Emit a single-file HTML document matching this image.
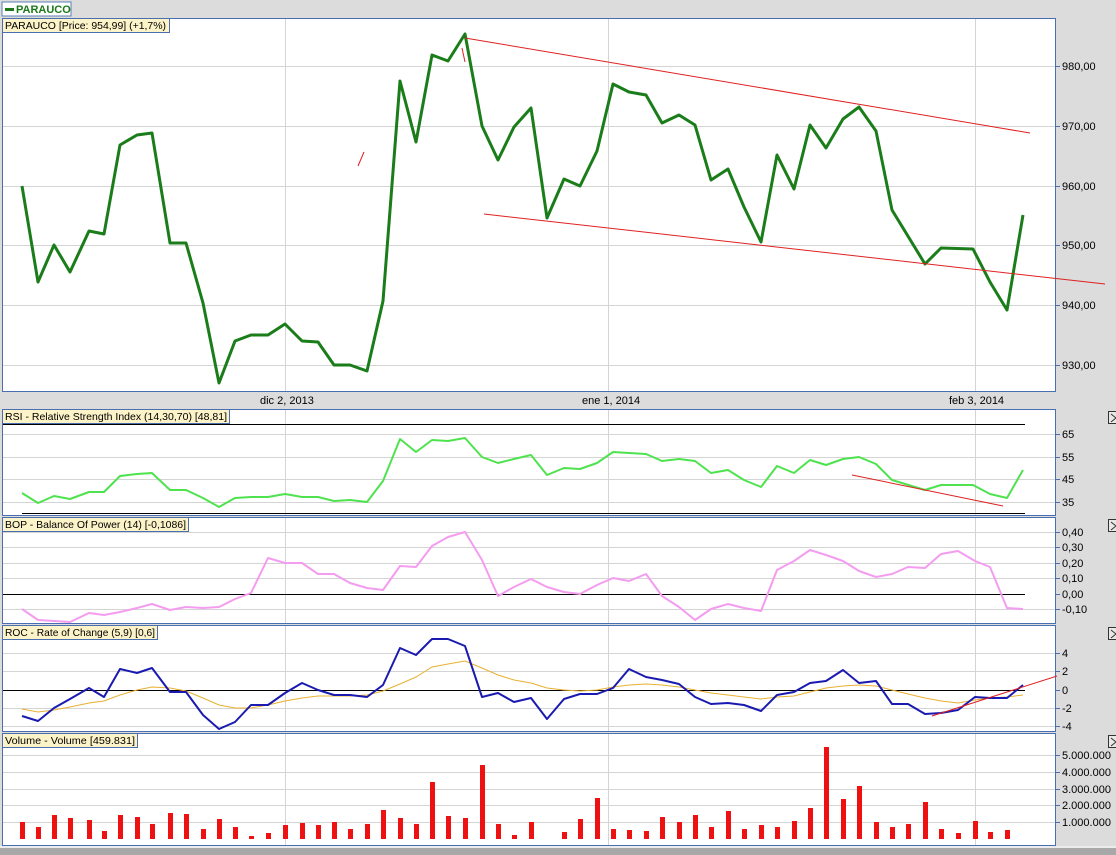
<!DOCTYPE html><html><head><meta charset="utf-8"><style>
body{margin:0;width:1116px;height:855px;overflow:hidden;background:#dcdcdc;font-family:"Liberation Sans",sans-serif}
svg{display:block}
text{font-family:"Liberation Sans",sans-serif;font-size:11px;fill:#000}
text.lb{font-size:10.4px}
</style></head><body>
<svg width="1116" height="855" viewBox="0 0 1116 855">
<rect x="0" y="0" width="1116" height="855" fill="#dcdcdc"/>
<rect x="0" y="848" width="1116" height="7" fill="#a8a8a8"/>
<rect x="0" y="846" width="1116" height="2" fill="#ececec"/>
<rect x="2" y="2" width="69" height="14" fill="#fff" stroke="#5b7fb5"/>
<rect x="5" y="8" width="9" height="3" fill="#1a7a1a"/>
<text x="16" y="13" style="font-weight:bold;fill:#1a7a1a;font-size:11px">PARAUCO</text>
<g fill="#fff" stroke="#4a6fb0">
<rect x="2.5" y="18.5" width="1053" height="373"/>
<rect x="2.5" y="409.5" width="1053" height="106"/>
<rect x="2.5" y="517.5" width="1053" height="106"/>
<rect x="2.5" y="625.5" width="1053" height="106"/>
<rect x="2.5" y="733.5" width="1053" height="112"/>
</g>
<g stroke="#d4d4d4" stroke-width="1">
<line x1="285.5" y1="19" x2="285.5" y2="391"/><line x1="608.5" y1="19" x2="608.5" y2="391"/><line x1="975.5" y1="19" x2="975.5" y2="391"/>
<line x1="285.5" y1="410" x2="285.5" y2="515"/><line x1="608.5" y1="410" x2="608.5" y2="515"/><line x1="975.5" y1="410" x2="975.5" y2="515"/>
<line x1="285.5" y1="518" x2="285.5" y2="623"/><line x1="608.5" y1="518" x2="608.5" y2="623"/><line x1="975.5" y1="518" x2="975.5" y2="623"/>
<line x1="285.5" y1="626" x2="285.5" y2="731"/><line x1="608.5" y1="626" x2="608.5" y2="731"/><line x1="975.5" y1="626" x2="975.5" y2="731"/>
<line x1="285.5" y1="734" x2="285.5" y2="845"/><line x1="608.5" y1="734" x2="608.5" y2="845"/><line x1="975.5" y1="734" x2="975.5" y2="845"/>
<line x1="3" y1="66.5" x2="1055" y2="66.5"/><line x1="3" y1="126.5" x2="1055" y2="126.5"/><line x1="3" y1="186.5" x2="1055" y2="186.5"/><line x1="3" y1="245.5" x2="1055" y2="245.5"/><line x1="3" y1="305.5" x2="1055" y2="305.5"/><line x1="3" y1="365.5" x2="1055" y2="365.5"/>
<line x1="3" y1="434.5" x2="1055" y2="434.5"/><line x1="3" y1="457.5" x2="1055" y2="457.5"/><line x1="3" y1="479.5" x2="1055" y2="479.5"/><line x1="3" y1="502.5" x2="1055" y2="502.5"/>
<line x1="3" y1="532.5" x2="1055" y2="532.5"/><line x1="3" y1="547.5" x2="1055" y2="547.5"/><line x1="3" y1="563.5" x2="1055" y2="563.5"/><line x1="3" y1="578.5" x2="1055" y2="578.5"/><line x1="3" y1="609.5" x2="1055" y2="609.5"/>
<line x1="3" y1="653.5" x2="1055" y2="653.5"/><line x1="3" y1="671.5" x2="1055" y2="671.5"/><line x1="3" y1="708.5" x2="1055" y2="708.5"/><line x1="3" y1="726.5" x2="1055" y2="726.5"/>
<line x1="3" y1="755.5" x2="1055" y2="755.5"/><line x1="3" y1="772.5" x2="1055" y2="772.5"/><line x1="3" y1="789.5" x2="1055" y2="789.5"/><line x1="3" y1="805.5" x2="1055" y2="805.5"/><line x1="3" y1="822.5" x2="1055" y2="822.5"/>
</g>
<g stroke="#4a6fb0"><line x1="1056" y1="66.5" x2="1060" y2="66.5"/><line x1="1056" y1="126.5" x2="1060" y2="126.5"/><line x1="1056" y1="186.5" x2="1060" y2="186.5"/><line x1="1056" y1="245.5" x2="1060" y2="245.5"/><line x1="1056" y1="305.5" x2="1060" y2="305.5"/><line x1="1056" y1="365.5" x2="1060" y2="365.5"/>
<line x1="1056" y1="434.5" x2="1060" y2="434.5"/><line x1="1056" y1="457.5" x2="1060" y2="457.5"/><line x1="1056" y1="479.5" x2="1060" y2="479.5"/><line x1="1056" y1="502.5" x2="1060" y2="502.5"/>
<line x1="1056" y1="532.5" x2="1060" y2="532.5"/><line x1="1056" y1="547.5" x2="1060" y2="547.5"/><line x1="1056" y1="563.5" x2="1060" y2="563.5"/><line x1="1056" y1="578.5" x2="1060" y2="578.5"/><line x1="1056" y1="594.5" x2="1060" y2="594.5"/><line x1="1056" y1="609.5" x2="1060" y2="609.5"/>
<line x1="1056" y1="653.5" x2="1060" y2="653.5"/><line x1="1056" y1="671.5" x2="1060" y2="671.5"/><line x1="1056" y1="690.5" x2="1060" y2="690.5"/><line x1="1056" y1="708.5" x2="1060" y2="708.5"/><line x1="1056" y1="726.5" x2="1060" y2="726.5"/>
<line x1="1056" y1="755.5" x2="1060" y2="755.5"/><line x1="1056" y1="772.5" x2="1060" y2="772.5"/><line x1="1056" y1="789.5" x2="1060" y2="789.5"/><line x1="1056" y1="805.5" x2="1060" y2="805.5"/><line x1="1056" y1="822.5" x2="1060" y2="822.5"/></g>
<g>
<text x="1062" y="70">980,00</text><text x="1062" y="130">970,00</text><text x="1062" y="190">960,00</text><text x="1062" y="249">950,00</text><text x="1062" y="309">940,00</text><text x="1062" y="369">930,00</text>
<text x="1062" y="438">65</text><text x="1062" y="461">55</text><text x="1062" y="483">45</text><text x="1062" y="506">35</text>
<text x="1062" y="536">0,40</text><text x="1062" y="551">0,30</text><text x="1062" y="567">0,20</text><text x="1062" y="582">0,10</text><text x="1062" y="598">0,00</text><text x="1062" y="613">-0,10</text>
<text x="1062" y="657">4</text><text x="1062" y="675">2</text><text x="1062" y="694">0</text><text x="1062" y="712">-2</text><text x="1062" y="730">-4</text>
<text x="1062" y="759">5.000.000</text><text x="1062" y="776">4.000.000</text><text x="1062" y="793">3.000.000</text><text x="1062" y="809">2.000.000</text><text x="1062" y="826">1.000.000</text>
<text x="260" y="404">dic 2, 2013</text><text x="582" y="404">ene 1, 2014</text><text x="949" y="404">feb 3, 2014</text>
</g>
<g fill="#e8e8e8" stroke="#333"><rect x="1108.5" y="411.5" width="10" height="12"/><rect x="1108.5" y="519.5" width="10" height="12"/><rect x="1108.5" y="627.5" width="10" height="12"/><rect x="1108.5" y="735.5" width="10" height="12"/></g>
<g stroke="#333" fill="none"><path d="M1111 414l5 4-5 4"/><path d="M1111 522l5 4-5 4"/><path d="M1111 630l5 4-5 4"/><path d="M1111 738l5 4-5 4"/></g>
<line x1="3" y1="594.5" x2="1025" y2="594.5" stroke="#000"/>
<line x1="3" y1="690.5" x2="1025" y2="690.5" stroke="#000"/>
<line x1="3" y1="424.5" x2="1025" y2="424.5" stroke="#000"/>
<line x1="22" y1="513.5" x2="1025" y2="513.5" stroke="#000"/>
<polyline fill="none" stroke="#1a7d1a" stroke-width="3" stroke-linejoin="round" points="22,186 38,282 54,245 70,272 89,231 104,234 120,145 137,135 152,133 170,243 186,243 203,303 219,383 235,341 251,335 268,335 285,324 302,341 318,342 334,365 350,365 367,371 383,301 400,81 416,142 432,55 448,61 465,34 482,126 498,160 514,127 531,108 547,218 564,179 580,186 597,151 613,84 629,92 646,95 662,123 679,115 695,125 711,180 728,169 744,207 761,242 777,155 794,189 810,125 826,148 843,119 859,107 876,131 892,210 925,264 941,248 973,249 990,282 1007,310 1023,215"/>
<g stroke="#e02020" stroke-width="1"><line x1="465" y1="38" x2="1030" y2="133"/><line x1="484" y1="214" x2="1105" y2="284"/><line x1="358" y1="166" x2="364" y2="152"/><line x1="462" y1="48" x2="465" y2="62"/></g>
<polyline fill="none" stroke="#4ee34e" stroke-width="2" stroke-linejoin="round" points="22,493 38,503 54,496 70,499 89,492 104,492 120,476 137,474 152,473 170,490 186,490 203,498 219,507 235,498 251,497 268,497 285,494 302,497 318,497 334,501 350,500 367,502 383,481 400,439 416,452 432,440 448,441 465,438 482,457 498,463 514,459 531,455 547,475 564,468 580,469 597,463 613,452 629,453 646,454 662,461 679,459 695,461 711,473 728,470 744,480 761,487 777,466 794,473 810,460 826,465 843,459 859,457 876,464 892,480 925,490 941,485 973,485 990,494 1007,498 1023,470"/>
<line x1="852" y1="475" x2="1003" y2="506" stroke="#e02020"/>
<polyline fill="none" stroke="#f49cf0" stroke-width="2" stroke-linejoin="round" points="22,609 38,620 54,621 70,622 89,613 104,615 120,612 137,608 152,604 170,610 186,607 203,608 219,607 235,599 251,593 268,558 285,563 302,563 318,574 334,574 350,583 367,588 383,590 400,566 416,567 432,546 448,537 465,532 482,560 498,596 514,587 531,579 547,587 564,592 580,594 597,585 613,578 629,581 646,574 662,596 679,607 695,620 711,609 728,604 744,608 761,611 777,570 794,561 810,550 826,555 843,561 859,571 876,577 892,574 908,567 925,568 941,554 958,551 975,561 990,567 1007,608 1023,609"/>
<polyline fill="none" stroke="#e8b030" stroke-width="1" points="22,709 38,712 54,710 70,707 89,703 104,701 120,695 137,690 152,687 170,688 186,691 203,698 219,705 235,708 251,708 268,705 285,701 302,698 318,696 334,696 350,696 367,695 383,691 400,684 416,677 432,667 448,664 465,661 482,668 498,675 514,680 531,683 547,688 564,690 580,691 597,690 613,687 629,685 646,684 662,685 679,687 695,690 711,693 728,695 744,697 761,699 777,697 794,696 810,692 826,688 843,686 859,685 876,686 892,690 908,694 925,698 941,701 958,703 975,700 990,698 1007,697 1023,695"/>
<polyline fill="none" stroke="#1a1ab0" stroke-width="2" stroke-linejoin="round" points="22,716 38,721 54,708 70,699 89,688 104,697 120,669 137,673 152,668 170,692 186,692 203,715 219,729 235,722 251,705 268,705 285,693 302,683 318,690 334,695 350,695 367,697 383,685 400,648 416,655 432,639 448,639 465,646 482,697 498,693 514,702 531,698 547,719 564,699 580,694 597,694 613,688 629,669 646,677 662,680 679,684 695,697 711,704 728,703 744,705 761,711 777,695 794,692 810,683 826,681 843,670 859,683 876,681 892,704 908,704 925,714 941,713 958,710 975,697 990,698 1007,698 1023,685"/>
<line x1="932" y1="716" x2="1057" y2="676" stroke="#e02020"/>
<g fill="#ee1111">
<rect x="20" y="822" width="5" height="17"/><rect x="36" y="827" width="5" height="12"/><rect x="52" y="815" width="5" height="24"/><rect x="68" y="818" width="5" height="21"/><rect x="87" y="820" width="5" height="19"/><rect x="102" y="831" width="5" height="8"/><rect x="118" y="815" width="5" height="24"/><rect x="135" y="817" width="5" height="22"/><rect x="150" y="824" width="5" height="15"/><rect x="168" y="813" width="5" height="26"/><rect x="184" y="814" width="5" height="25"/><rect x="201" y="829" width="5" height="10"/><rect x="217" y="819" width="5" height="20"/><rect x="233" y="827" width="5" height="12"/><rect x="249" y="836" width="5" height="3"/><rect x="266" y="833" width="5" height="6"/><rect x="283" y="825" width="5" height="14"/><rect x="300" y="823" width="5" height="16"/><rect x="316" y="825" width="5" height="14"/><rect x="332" y="822" width="5" height="17"/><rect x="348" y="829" width="5" height="10"/><rect x="365" y="824" width="5" height="15"/><rect x="381" y="810" width="5" height="29"/><rect x="398" y="818" width="5" height="21"/><rect x="414" y="824" width="5" height="15"/><rect x="430" y="782" width="5" height="57"/><rect x="446" y="816" width="5" height="23"/><rect x="463" y="818" width="5" height="21"/><rect x="480" y="765" width="5" height="74"/><rect x="496" y="824" width="5" height="15"/><rect x="512" y="835" width="5" height="4"/><rect x="529" y="822" width="5" height="17"/><rect x="562" y="832" width="5" height="7"/><rect x="578" y="819" width="5" height="20"/><rect x="595" y="798" width="5" height="41"/><rect x="611" y="829" width="5" height="10"/><rect x="627" y="830" width="5" height="9"/><rect x="644" y="831" width="5" height="8"/><rect x="660" y="817" width="5" height="22"/><rect x="677" y="822" width="5" height="17"/><rect x="693" y="815" width="5" height="24"/><rect x="709" y="827" width="5" height="12"/><rect x="726" y="811" width="5" height="28"/><rect x="742" y="829" width="5" height="10"/><rect x="759" y="825" width="5" height="14"/><rect x="775" y="827" width="5" height="12"/><rect x="792" y="821" width="5" height="18"/><rect x="808" y="808" width="5" height="31"/><rect x="824" y="747" width="5" height="92"/><rect x="841" y="799" width="5" height="40"/><rect x="857" y="786" width="5" height="53"/><rect x="874" y="822" width="5" height="17"/><rect x="890" y="827" width="5" height="12"/><rect x="906" y="824" width="5" height="15"/><rect x="923" y="802" width="5" height="37"/><rect x="939" y="829" width="5" height="10"/><rect x="956" y="833" width="5" height="6"/><rect x="973" y="821" width="5" height="18"/><rect x="988" y="832" width="5" height="7"/><rect x="1005" y="830" width="5" height="9"/>
</g>
<g fill="#fdf3c8" stroke="#4a6fb0">
<rect x="2.5" y="18.5" width="167" height="14"/>
<rect x="2.5" y="409.5" width="227" height="14"/>
<rect x="2.5" y="517.5" width="186" height="14"/>
<rect x="2.5" y="625.5" width="155" height="14"/>
<rect x="2.5" y="733.5" width="135" height="14"/>
</g>
<text class="lb" x="5" y="29" textLength="161" lengthAdjust="spacingAndGlyphs">PARAUCO [Price: 954,99] (+1,7%)</text>
<text class="lb" x="5" y="420" textLength="222" lengthAdjust="spacingAndGlyphs">RSI - Relative Strength Index (14,30,70) [48,81]</text>
<text class="lb" x="5" y="528" textLength="181" lengthAdjust="spacingAndGlyphs">BOP - Balance Of Power (14) [-0,1086]</text>
<text class="lb" x="5" y="636" textLength="150" lengthAdjust="spacingAndGlyphs">ROC - Rate of Change (5,9) [0,6]</text>
<text class="lb" x="5" y="744" textLength="130" lengthAdjust="spacingAndGlyphs">Volume - Volume [459.831]</text>
</svg>
</body></html>
